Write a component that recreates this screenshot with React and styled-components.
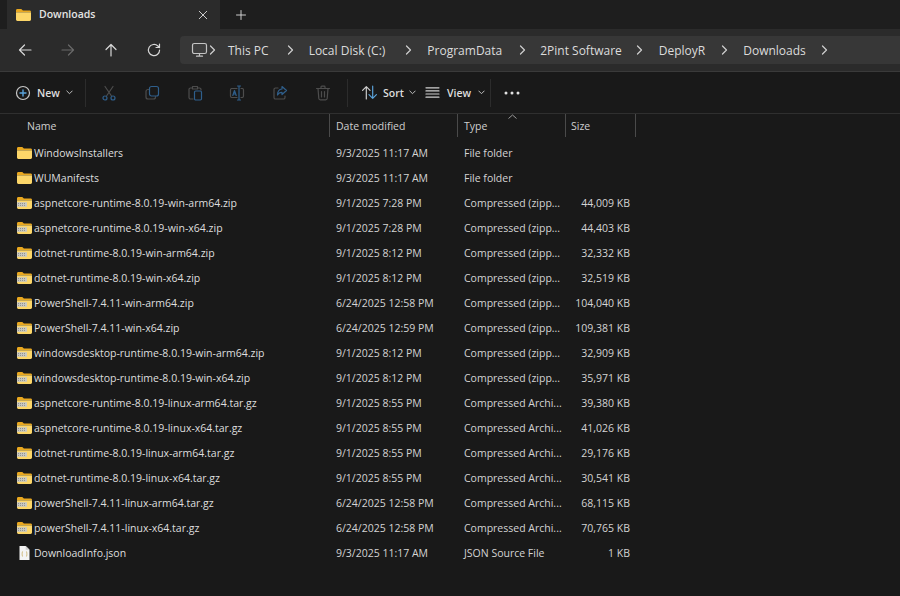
import React from 'react';
import styled, { createGlobalStyle } from 'styled-components';

const GlobalStyle = createGlobalStyle`
  html, body {
    margin: 0;
    padding: 0;
    background: #191919;
  }
  body {
    font-family: "Open Sans", "Noto Sans", "Liberation Sans", sans-serif;
    overflow: hidden;
  }
`;

const Root = styled.div`
  width: 900px;
  height: 596px;
  background: #191919;
  overflow: hidden;
`;

/* title strip */
const TabStrip = styled.div`
  height: 29px;
  background: #1e1e1e;
  display: flex;
  align-items: flex-end;
`;

const Tab = styled.div`
  width: 213px;
  height: 29px;
  margin-left: 7px;
  padding: 0 11px 0 8px;
  box-sizing: border-box;
  background: #2b2b2b;
  border-radius: 0 0 0 0;
  display: flex;
  align-items: center;
  gap: 7px;
  font-size: 10.5px;
  font-weight: 600;
  color: #e4e4e4;
`;

const TabTitle = styled.span`
  flex: 1;
  padding-bottom: 1px;
`;

const NewTab = styled.div`
  width: 14px;
  height: 29px;
  margin-left: 14px;
  display: flex;
  align-items: center;
  justify-content: center;
`;

/* address bar */
const NavBar = styled.div`
  height: 42px;
  background: #2b2b2b;
  border-bottom: 1px solid #3a3a3a;
  display: flex;
  align-items: center;
  box-sizing: content-box;
`;

const NavButtons = styled.div`
  width: 180px;
  padding-left: 3px;
  box-sizing: border-box;
  display: grid;
  grid-template-columns: repeat(4, 43px);
  justify-items: center;
`;

const AddressBar = styled.div`
  flex: 1;
  height: 28px;
  background: #373737;
  border-radius: 4px 0 0 4px;
  display: flex;
  align-items: center;
  padding-left: 11px;
  font-size: 12px;
  color: #dcdcdc;
`;

const Crumb = styled.span`
  margin: 0 ${p => p.$after}px 0 ${p => p.$before}px;
  white-space: nowrap;
`;

const ChevronBox = styled.span`
  display: flex;
  width: 8px;
  justify-content: center;
`;

/* command bar */
const CommandBar = styled.div`
  height: 41px;
  background: #191919;
  border-bottom: 1px solid #2f2f2f;
  display: flex;
  align-items: center;
`;

const Command = styled.div`
  width: ${p => p.$w}px;
  margin-left: ${p => p.$ml || 0}px;
  flex: none;
  display: flex;
  align-items: center;
  justify-content: ${p => (p.$center ? 'center' : 'flex-start')};
  gap: ${p => p.$gap || 0}px;
  font-size: 10.5px;
  font-weight: 600;
  color: #dedede;
`;

const Divider = styled.div`
  width: 1px;
  height: 28px;
  flex: none;
  margin-left: ${p => p.$ml || 0}px;
  background: #2c2c2c;
`;

/* file list */
const HeaderRow = styled.div`
  height: 23px;
  position: relative;
  display: grid;
  grid-template-columns: 330px 128px 108px 70px;
  font-size: 10.5px;
  color: #cfcfcf;
`;

const HeaderCell = styled.div`
  display: flex;
  align-items: center;
  padding-left: ${p => p.$pl}px;
  border-right: ${p => (p.$last === false ? 'none' : '1px solid #4a4a4a')};
  box-sizing: border-box;
`;

const SortCaret = styled.svg`
  position: absolute;
  left: 507px;
  top: 0;
`;

const List = styled.div`
  padding-top: 3px;
`;

const Row = styled.div`
  height: 25px;
  display: grid;
  grid-template-columns: 330px 128px 108px 70px;
  align-items: center;
  font-size: 10.5px;
  color: #d4d4d4;
`;

const NameCell = styled.div`
  display: flex;
  align-items: center;
  gap: 1px;
  padding-left: 16px;
  color: #dedede;
  white-space: nowrap;
`;

const Cell = styled.div`
  padding-left: 6px;
  white-space: nowrap;
`;

const SizeCell = styled.div`
  text-align: right;
  padding-right: 6px;
  white-space: nowrap;
`;

const Stroke = ({ size = 16, color = '#d8d8d8', w = 1.2, children }) => (
  <svg width={size} height={size} viewBox="0 0 16 16" fill="none" stroke={color} strokeWidth={w} strokeLinecap="round" strokeLinejoin="round">
    {children}
  </svg>
);

const FolderIcon = () => (
  <svg width="17" height="16" viewBox="0 0 17 16">
    <path d="M1 3.4C1 2.6 1.6 2 2.4 2h3.9l1.6 1.5h6.7c.8 0 1.4.6 1.4 1.4V5H1z" fill="#e9a820" />
    <path d="M1 5.2h15v7.4c0 .8-.6 1.4-1.4 1.4H2.4C1.6 14 1 13.4 1 12.6z" fill="#fcd669" />
  </svg>
);

const ZipIcon = () => (
  <svg width="17" height="16" viewBox="0 0 17 16">
    <path d="M1 3.4C1 2.6 1.6 2 2.4 2h3.9l1.6 1.5h6.7c.8 0 1.4.6 1.4 1.4V5H1z" fill="#e9a820" />
    <path d="M1 5.2h15v7.4c0 .8-.6 1.4-1.4 1.4H2.4C1.6 14 1 13.4 1 12.6z" fill="#fcd669" />
    <rect x="1" y="7.2" width="10" height="4.6" fill="#c9c9c2" />
    <path d="M2 8.5h8M2 10.4h8" stroke="#8a8a84" strokeWidth="0.9" strokeDasharray="1 1" />
  </svg>
);

const JsonIcon = () => (
  <svg width="17" height="16" viewBox="0 0 17 16">
    <path d="M3.5 1h6.2L13.5 4.8V15h-10z" fill="#f4f4f4" />
    <path d="M9.7 1v3.8h3.8" fill="#cfcfcf" />
    <path d="M7 6.5c-1 0-.6 2-1 2.5.4.5 0 2.500 1 2.500M10 6.500c1 0 .6 2 1 2.500-.4.5 0 2.500-1 2.500" fill="none" stroke="#c9b06a" strokeWidth="0.9" />
  </svg>
);

const icons = { folder: FolderIcon, zip: ZipIcon, json: JsonIcon };

const ArrowLeft = ({ color }) => (
  <Stroke color={color}><path d="M14 8H2.500M7.500 3 2.500 8l5 5" /></Stroke>
);
const ArrowRight = ({ color }) => (
  <Stroke color={color}><path d="M2 8h11.500M8.500 3l5 5-5 5" /></Stroke>
);
const ArrowUp = () => (
  <Stroke><path d="M8 14V2.500M3 7.500l5-5 5 5" /></Stroke>
);
const Refresh = () => (
  <Stroke><path d="M13.600 8a5.600 5.600 0 1 1-1.700-4L13.500 5.500M13.500 2v3.500H10" /></Stroke>
);
const Monitor = () => (
  <svg width="17" height="16" viewBox="0 0 17 16" fill="none" stroke="#c4c4c4" strokeWidth="1.200" strokeLinejoin="round" strokeLinecap="round">
    <rect x="1.500" y="1.500" width="14" height="10" rx="1.800" fill="#3e3e3e" />
    <path d="M8.500 11.500v2.500M5.500 14.200h6" />
  </svg>
);
const Chevron = () => (
  <ChevronBox>
    <svg width="7" height="10" viewBox="0 0 7 10" fill="none" stroke="#d0d0d0" strokeWidth="1.200" strokeLinecap="round" strokeLinejoin="round">
      <path d="M1.500 1 5.500 5l-4 4" />
    </svg>
  </ChevronBox>
);
const Caret = () => (
  <svg width="7" height="5" viewBox="0 0 7 5" fill="none" stroke="#bdbdbd" strokeWidth="1" strokeLinecap="round" strokeLinejoin="round">
    <path d="M.8 1 3.500 3.700 6.200 1" />
  </svg>
);

const DIM = '#4d4d4d';
const BLUE = '#2f5f8c';

const PlusCircle = () => (
  <Stroke>
    <circle cx="8" cy="8" r="6.500" stroke="#c8c8c8" />
    <path d="M8 5v6M5 8h6" stroke="#5ba4dc" strokeWidth="1.400" />
  </Stroke>
);
const Cut = () => (
  <Stroke color={DIM}>
    <path d="M4 1.500 10.500 11M12 1.500 5.500 11" />
    <circle cx="4" cy="13" r="2" stroke={BLUE} />
    <circle cx="12" cy="13" r="2" stroke={BLUE} />
  </Stroke>
);
const CopyIcon = () => (
  <Stroke color={DIM}>
    <path d="M4.500 4.500h-.500a2 2 0 0 0-2 2V12a2 2 0 0 0 2 2h5.500a2 2 0 0 0 2-2v-.5" />
    <rect x="5.500" y="1.500" width="9" height="9.500" rx="2" stroke={BLUE} />
  </Stroke>
);
const PasteIcon = () => (
  <Stroke color={DIM}>
    <path d="M5 3H3.500A1.500 1.500 0 0 0 2 4.500v8A1.500 1.500 0 0 0 3.500 14H6M11 3h1.500A1.500 1.500 0 0 1 14 4.500V5M5.500 1.500h5V4h-5z" />
    <rect x="7.500" y="6" width="7" height="9" rx="1.200" stroke={BLUE} />
  </Stroke>
);
const RenameIcon = () => (
  <Stroke color={DIM}>
    <path d="M8 3.500H2.500a1.500 1.500 0 0 0-1 1.500v6a1.500 1.500 0 0 0 1 1.500H8M12 3.500h1.500a1.500 1.500 0 0 1 1 1.500v6a1.500 1.500 0 0 1-1 1.500H12" />
    <path d="M10 1h0M10 1v14M8.500 1h3M8.500 15h3M3.800 10.500 5.500 5.500l1.700 5M4.400 9h2.200" stroke={BLUE} />
  </Stroke>
);
const ShareIcon = () => (
  <Stroke color={DIM}>
    <path d="M6 3H3.500A1.500 1.500 0 0 0 2 4.500v8A1.500 1.500 0 0 0 3.500 14h8a1.500 1.500 0 0 0 1.500-1.500V11" />
    <path d="M10 1.500 14.500 5.500 10 9.500V7.300C8 7.300 6.500 8 5.500 10c0-3.500 1.500-5.700 4.500-6z" stroke={BLUE} />
  </Stroke>
);
const TrashIcon = () => (
  <Stroke color={DIM}>
    <path d="M1.500 3.500h13M6 3.500V2a.8.8 0 0 1 .8-.8h2.400A.8.8 0 0 1 10 2v1.500M3 3.500l.8 10a1.500 1.500 0 0 0 1.500 1.300h5.400a1.500 1.500 0 0 0 1.500-1.300l.8-10M6.500 6.500v5.500M9.500 6.500v5.500" />
  </Stroke>
);
const SortIcon = () => (
  <Stroke w={1.100} size={17}>
    <path d="M5 14V2.500M1.500 6 5 2.500 8.500 6" stroke="#cfcfcf" />
    <path d="M11 2v11.500M7.500 10l3.500 3.500 3.500-3.500" stroke="#5ba4dc" />
  </Stroke>
);
const ViewIcon = () => (
  <Stroke size={15} color="#cfcfcf">
    <path d="M1 3h14M1 6.300h14M1 9.600h14M1 13h14" />
  </Stroke>
);
const More = () => (
  <svg width="16" height="4" viewBox="0 0 16 4" fill="#e2e2e2">
    <circle cx="2" cy="2" r="1.500" />
    <circle cx="8" cy="2" r="1.500" />
    <circle cx="14" cy="2" r="1.500" />
  </svg>
);

const crumbs = [
  { label: 'This PC', before: 12, after: 18 },
  { label: 'Local Disk (C:)', before: 14, after: 19 },
  { label: 'ProgramData', before: 15, after: 16 },
  { label: '2Pint Software', before: 14, after: 14 },
  { label: 'DeployR', before: 15, after: 15 },
  { label: 'Downloads', before: 15, after: 15 },
];

const ZIP = 'Compressed (zipp...';
const TAR = 'Compressed Archi...';

const files = [
  ['folder', 'WindowsInstallers', '9/3/2025 11:17 AM', 'File folder', ''],
  ['folder', 'WUManifests', '9/3/2025 11:17 AM', 'File folder', ''],
  ['zip', 'aspnetcore-runtime-8.0.19-win-arm64.zip', '9/1/2025 7:28 PM', ZIP, '44,009 KB'],
  ['zip', 'aspnetcore-runtime-8.0.19-win-x64.zip', '9/1/2025 7:28 PM', ZIP, '44,403 KB'],
  ['zip', 'dotnet-runtime-8.0.19-win-arm64.zip', '9/1/2025 8:12 PM', ZIP, '32,332 KB'],
  ['zip', 'dotnet-runtime-8.0.19-win-x64.zip', '9/1/2025 8:12 PM', ZIP, '32,519 KB'],
  ['zip', 'PowerShell-7.4.11-win-arm64.zip', '6/24/2025 12:58 PM', ZIP, '104,040 KB'],
  ['zip', 'PowerShell-7.4.11-win-x64.zip', '6/24/2025 12:59 PM', ZIP, '109,381 KB'],
  ['zip', 'windowsdesktop-runtime-8.0.19-win-arm64.zip', '9/1/2025 8:12 PM', ZIP, '32,909 KB'],
  ['zip', 'windowsdesktop-runtime-8.0.19-win-x64.zip', '9/1/2025 8:12 PM', ZIP, '35,971 KB'],
  ['zip', 'aspnetcore-runtime-8.0.19-linux-arm64.tar.gz', '9/1/2025 8:55 PM', TAR, '39,380 KB'],
  ['zip', 'aspnetcore-runtime-8.0.19-linux-x64.tar.gz', '9/1/2025 8:55 PM', TAR, '41,026 KB'],
  ['zip', 'dotnet-runtime-8.0.19-linux-arm64.tar.gz', '9/1/2025 8:55 PM', TAR, '29,176 KB'],
  ['zip', 'dotnet-runtime-8.0.19-linux-x64.tar.gz', '9/1/2025 8:55 PM', TAR, '30,541 KB'],
  ['zip', 'powerShell-7.4.11-linux-arm64.tar.gz', '6/24/2025 12:58 PM', TAR, '68,115 KB'],
  ['zip', 'powerShell-7.4.11-linux-x64.tar.gz', '6/24/2025 12:58 PM', TAR, '70,765 KB'],
  ['json', 'DownloadInfo.json', '9/3/2025 11:17 AM', 'JSON Source File', '1 KB'],
];

function App() {
  return (
    <Root>
      <GlobalStyle />
      <TabStrip>
        <Tab>
          <FolderIcon />
          <TabTitle>Downloads</TabTitle>
          <Stroke size={12} color="#e0e0e0"><path d="M3 3l10 10M13 3 3 13" /></Stroke>
        </Tab>
        <NewTab>
          <Stroke size={12} color="#e0e0e0"><path d="M8 2v12M2 8h12" /></Stroke>
        </NewTab>
      </TabStrip>

      <NavBar>
        <NavButtons>
          <ArrowLeft color="#d8d8d8" />
          <ArrowRight color="#6a6a6a" />
          <ArrowUp />
          <Refresh />
        </NavButtons>
        <AddressBar>
          <Monitor />
          {crumbs.map((c, i) => (
            <React.Fragment key={c.label}>
              {i === 0 && <ChevronGap />}
              <Crumb $before={c.before} $after={c.after}>{c.label}</Crumb>
              <Chevron />
            </React.Fragment>
          ))}
        </AddressBar>
      </NavBar>

      <CommandBar>
        <Command $w={60} $ml={15} $gap={6}>
          <PlusCircle />
          <span>New</span>
          <Caret />
        </Command>
        <Divider $ml={10} />
        <Command $w={16} $ml={15} $center><Cut /></Command>
        <Command $w={16} $ml={27} $center><CopyIcon /></Command>
        <Command $w={16} $ml={27} $center><PasteIcon /></Command>
        <Command $w={16} $ml={26} $center><RenameIcon /></Command>
        <Command $w={16} $ml={27} $center><ShareIcon /></Command>
        <Command $w={16} $ml={27} $center><TrashIcon /></Command>
        <Divider $ml={16} />
        <Command $w={60} $ml={13} $gap={5}>
          <SortIcon />
          <span>Sort</span>
          <Caret />
        </Command>
        <Command $w={60} $ml={4} $gap={7}>
          <ViewIcon />
          <span>View</span>
          <Caret />
        </Command>
        <Divider $ml={5} />
        <Command $w={16} $ml={13} $center><More /></Command>
      </CommandBar>

      <HeaderRow>
        <HeaderCell $pl={27}>Name</HeaderCell>
        <HeaderCell $pl={6}>Date modified</HeaderCell>
        <HeaderCell $pl={6}>Type</HeaderCell>
        <HeaderCell $pl={5}>Size</HeaderCell>
        <SortCaret width="11" height="6" viewBox="0 0 11 6" fill="none" stroke="#9a9a9a" strokeWidth="1">
          <path d="M1.500 4.500 5.500 1l4 3.500" />
        </SortCaret>
      </HeaderRow>

      <List>
        {files.map(([kind, name, date, type, size]) => {
          const Icon = icons[kind];
          return (
            <Row key={name}>
              <NameCell><Icon />{name}</NameCell>
              <Cell>{date}</Cell>
              <Cell>{type}</Cell>
              <SizeCell>{size}</SizeCell>
            </Row>
          );
        })}
      </List>
    </Root>
  );
}

const ChevronGap = () => <Chevron />;

export default App;
